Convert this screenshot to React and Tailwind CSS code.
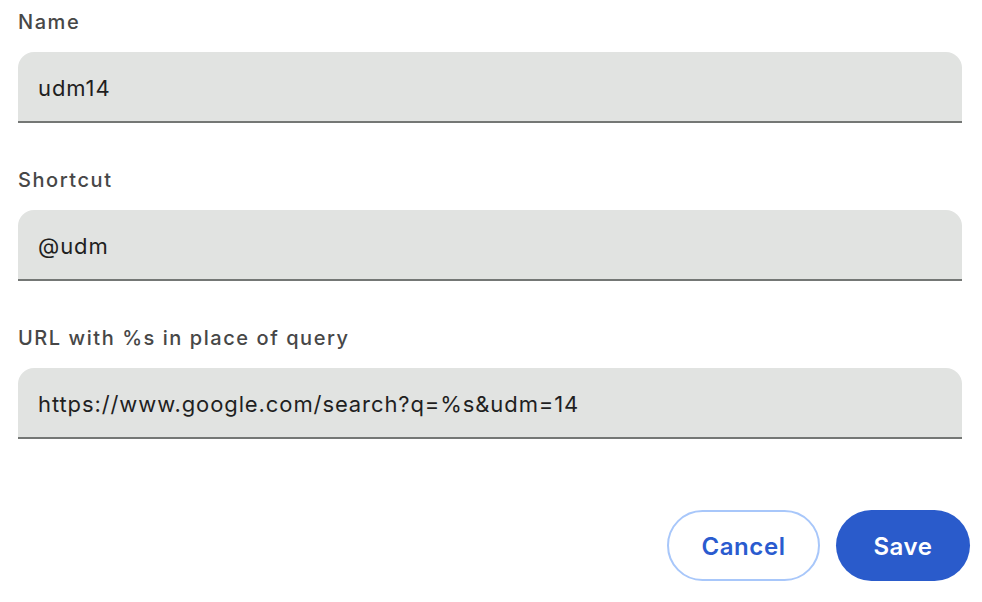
import React from 'react';

const Field = ({ label, value }) => (
  <div className="flex flex-col">
    <label className="text-[20px] leading-[20px] font-medium tracking-[1.55px] text-[#474747] h-[40px]">
      {label}
    </label>
    <div className="h-[71px] bg-[#e1e3e1] rounded-t-[16px] border-b-2 border-[#747775] flex items-center px-[20px] pt-[3px]">
      <span className="text-[22px] tracking-[0.9px] text-[#1f1f1f]">{value}</span>
    </div>
  </div>
);

export default function App() {
  return (
    <div
      className="w-[982px] h-[602px] bg-white overflow-hidden"
      style={{ fontFamily: 'Inter, "Noto Sans", sans-serif' }}
    >
      <div className="pl-[18px] pr-[20px] pt-[12px] flex flex-col gap-[47px]">
        <Field label="Name" value="udm14" />
        <Field label="Shortcut" value="@udm" />
        <Field label="URL with %s in place of query" value="https://www.google.com/search?q=%s&udm=14" />
      </div>
      <div className="flex justify-end gap-[16px] pr-[12px] mt-[71px]">
        <button className="h-[71px] w-[153px] rounded-full border-2 border-[#a8c7fa] bg-white text-[#2a5bcf] text-[24px] tracking-[0.6px] font-semibold pt-[2px]">
          Cancel
        </button>
        <button className="h-[71px] w-[134px] rounded-full bg-[#2a5bcb] text-white text-[24px] tracking-[0.6px] font-semibold pt-[2px]">
          Save
        </button>
      </div>
    </div>
  );
}
